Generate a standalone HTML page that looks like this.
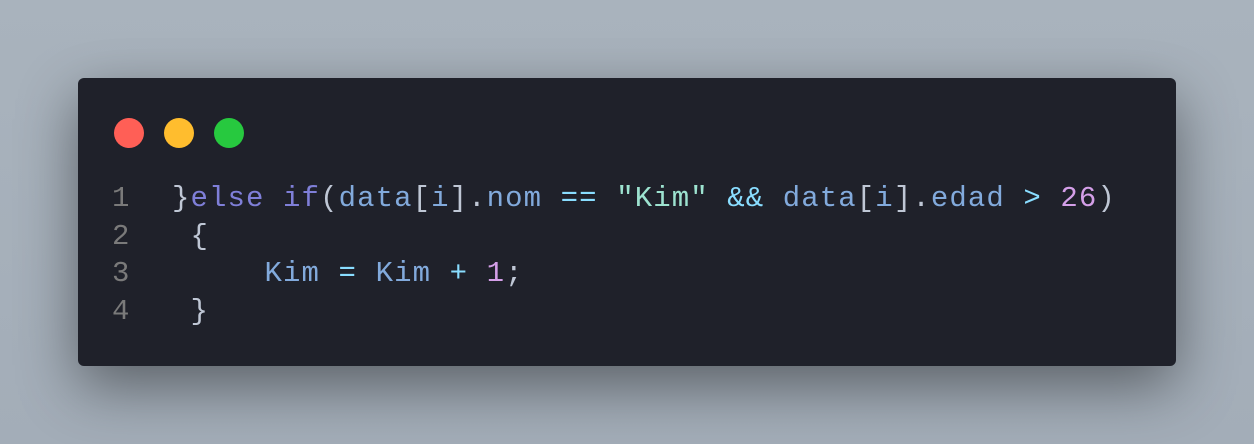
<!DOCTYPE html>
<html><head><style>
html,body{margin:0;width:1254px;height:444px;overflow:hidden}
body{background:linear-gradient(180deg,#a9b3bd,#a3adb8);position:relative;font-family:"Liberation Mono",monospace}
.win{position:absolute;left:78px;top:78px;width:1098px;height:288px;background:#1f212a;border-radius:6px;box-shadow:0 20px 60px rgba(0,0,0,.45)}
.dot{position:absolute;top:40px;width:30px;height:30px;border-radius:50%}
.code{position:absolute;left:0;top:102px;width:1098px;font-size:29px;letter-spacing:1.1px;line-height:37.5px;white-space:pre;color:#bfc7d5}
.ln{position:absolute;left:34px;top:0;color:#7a7a7a}
.c{position:absolute;left:94px;top:0}
.k{color:#7f7fd8}.v{color:#82aadc}.o{color:#89ddff}.n{color:#d49fe8}.s{color:#9de3d0}
</style></head><body>
<div class="win">
<div class="dot" style="left:36px;background:#ff5f56"></div>
<div class="dot" style="left:86px;background:#ffbd2e"></div>
<div class="dot" style="left:136px;background:#27c93f"></div>
<div class="code"><div class="ln">1
2
3
4</div><div class="c">}<span class="k">else</span> <span class="k">if</span>(<span class="v">data</span>[<span class="v">i</span>].<span class="v">nom</span> <span class="o">==</span> <span class="s">"Kim"</span> <span class="o">&amp;&amp;</span> <span class="v">data</span>[<span class="v">i</span>].<span class="v">edad</span> <span class="o">&gt;</span> <span class="n">26</span>)
 {
     <span class="v">Kim</span> <span class="o">=</span> <span class="v">Kim</span> <span class="o">+</span> <span class="n">1</span>;
 }</div></div>
</div>
</body></html>
